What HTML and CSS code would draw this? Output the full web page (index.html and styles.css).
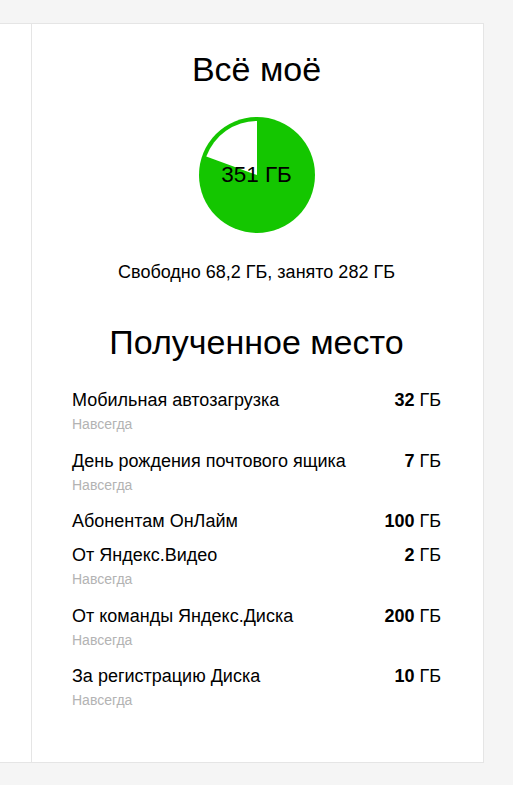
FILE: index.html
```html
<!DOCTYPE html>
<html lang="ru">
<head>
<meta charset="utf-8">
<link rel="stylesheet" href="styles.css">
</head>
<body>
<div class="card">
  <div class="side"></div>
  <div class="main">
    <h1 class="title">Всё моё</h1>
    <div class="pie">
      <svg width="116" height="116" viewBox="0 0 116 116">
        <circle cx="58" cy="58" r="58" fill="#14c600"/>
        <path d="M58 58 L58 4 A54 54 0 0 0 7.26 39.53 Z" fill="#fff"/>
      </svg>
      <div class="pie-label">351 ГБ</div>
    </div>
    <div class="summary">Свободно 68,2 ГБ, занято 282 ГБ</div>
    <h2 class="title title-2">Полученное место</h2>
    <ul class="list">
      <li class="item">
        <div class="row"><span class="name">Мобильная автозагрузка</span><span class="size"><b>32</b> ГБ</span></div>
        <div class="term">Навсегда</div>
      </li>
      <li class="item">
        <div class="row"><span class="name">День рождения почтового ящика</span><span class="size"><b>7</b> ГБ</span></div>
        <div class="term">Навсегда</div>
      </li>
      <li class="item">
        <div class="row"><span class="name">Абонентам ОнЛайм</span><span class="size"><b>100</b> ГБ</span></div>
      </li>
      <li class="item">
        <div class="row"><span class="name">От Яндекс.Видео</span><span class="size"><b>2</b> ГБ</span></div>
        <div class="term">Навсегда</div>
      </li>
      <li class="item">
        <div class="row"><span class="name">От команды Яндекс.Диска</span><span class="size"><b>200</b> ГБ</span></div>
        <div class="term">Навсегда</div>
      </li>
      <li class="item">
        <div class="row"><span class="name">За регистрацию Диска</span><span class="size"><b>10</b> ГБ</span></div>
        <div class="term">Навсегда</div>
      </li>
    </ul>
  </div>
</div>
</body>
</html>
```
FILE: styles.css
```css
html, body {
  margin: 0;
  padding: 0;
  background: #f5f5f5;
  font-family: "Liberation Sans", Arial, sans-serif;
  color: #000;
}
.card {
  margin-top: 23px;
  width: 483px;
  height: 738px;
  background: #fff;
  border: 1px solid #e5e5e5;
  border-left: none;
  display: flex;
}
.side {
  width: 31px;
  flex: none;
  border-right: 1px solid #e5e5e5;
}
.main {
  flex: 1;
  padding: 25px 42px 0 40px;
  display: flex;
  flex-direction: column;
}
.title {
  margin: 0;
  font-size: 34px;
  font-weight: normal;
  line-height: 40px;
  text-align: center;
}
.pie {
  position: relative;
  width: 116px;
  height: 116px;
  margin: 28px auto 0;
}
.pie svg {
  display: block;
}
.pie-label {
  position: absolute;
  inset: 0;
  display: flex;
  align-items: center;
  justify-content: center;
  font-size: 22.5px;
}
.summary {
  margin-top: 29px;
  font-size: 18px;
  line-height: 20px;
  text-align: center;
}
.title-2 {
  margin-top: 40px;
}
.list {
  list-style: none;
  margin: 28px 0 0;
  padding: 0;
}
.item {
  margin-bottom: 14px;
}
.row {
  display: flex;
  justify-content: space-between;
  font-size: 18px;
  line-height: 20px;
}
.size b {
  font-weight: bold;
}
.term {
  margin-top: 5px;
  padding-bottom: 3.5px;
  font-size: 14px;
  line-height: 18px;
  color: #b3b3b3;
}
```
